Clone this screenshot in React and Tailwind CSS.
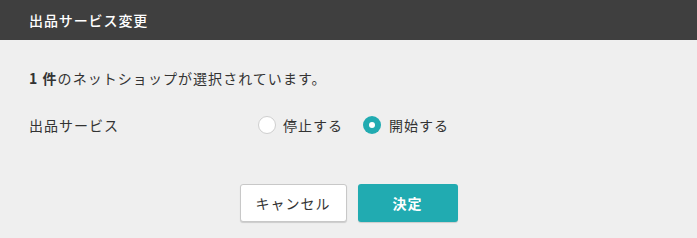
export default function App() {
  return (
    <div className="w-[697px] h-[238px] bg-[#efefef] text-[#333] overflow-hidden" style={{ fontFamily: '"Noto Sans CJK JP", "Noto Sans", sans-serif' }}>
      <div className="h-[40px] bg-[#3f3f3f] flex items-center px-[29px]">
        <span className="text-white text-[14px] font-medium tracking-[0.9px]">出品サービス変更</span>
      </div>
      <div className="px-[29px] pt-[27px]">
        <p className="text-[14px] leading-[22px] tracking-[1.05px]"><span className="font-bold">1 件</span>のネットショップが選択されています。</p>
        <div className="flex items-center mt-[25px] h-[22px]">
          <span className="w-[229px] text-[14px] tracking-[1px]">出品サービス</span>
          <label className="flex items-center">
            <span className="w-[18px] h-[18px] rounded-full bg-white border border-[#cfcfcf]"></span>
            <span className="ml-[7px] text-[14px] tracking-[1px]">停止する</span>
          </label>
          <label className="flex items-center ml-[20px]">
            <span className="w-[18px] h-[18px] rounded-full bg-[#21abb1] flex items-center justify-center">
              <span className="w-[6px] h-[6px] rounded-full bg-white"></span>
            </span>
            <span className="ml-[8px] text-[14px] tracking-[1px]">開始する</span>
          </label>
        </div>
      </div>
      <div className="flex justify-center gap-[11px] mt-[48px]">
        <button className="w-[107px] h-[38px] bg-white border border-[#c8c8c8] rounded-[3px] shadow-[0_1px_1px_rgba(0,0,0,0.15)] text-[14px] tracking-[1px] text-[#333]">キャンセル</button>
        <button className="w-[100px] h-[38px] bg-[#21abb1] rounded-[3px] shadow-[0_1px_1px_rgba(0,0,0,0.15)] text-[14px] font-bold tracking-[1px] text-white">決定</button>
      </div>
    </div>
  );
}
